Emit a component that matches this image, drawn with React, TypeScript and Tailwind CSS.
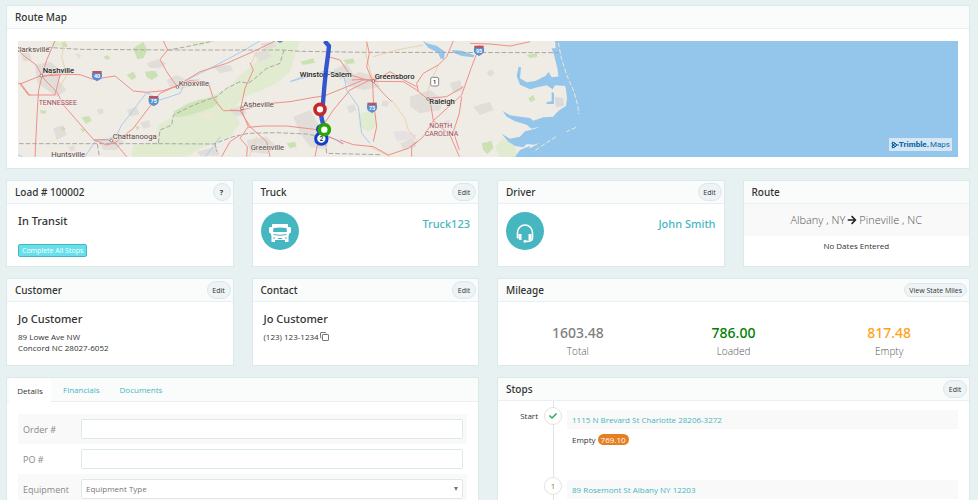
import type { ReactNode } from 'react'
import { FaArrowRight, FaCheck } from 'react-icons/fa'

interface CardProps {
  title: string
  action?: string
  className?: string
  children: ReactNode
}

function PillButton({ label }: { label: string }) {
  const shape =
    label === '?'
      ? 'h-[18px] w-[18px] font-bold'
      : label === 'Edit'
        ? 'h-[18px] w-6'
        : 'h-[14px] px-1'
  return (
    <button
      type="button"
      className={`${shape} flex shrink-0 items-center justify-center whitespace-nowrap rounded-full border border-[#dbe7ea] bg-[#eef3f5] text-[7px] leading-none text-[#333]`}
    >
      {label}
    </button>
  )
}

function Card({ title, action, className = '', children }: CardProps) {
  return (
    <section className={`border border-[#dce9ea] bg-white ${className}`}>
      <header className="flex h-[23px] items-center justify-between border-b border-[#e8f1f1] bg-[#f9fcfb] pl-2 pr-0.5">
        <h2 className="font-['Noto_Sans',sans-serif] text-[10px] font-medium leading-none">{title}</h2>
        {action && <PillButton label={action} />}
      </header>
      {children}
    </section>
  )
}

const URBAN = [
  '105,195 150,185 190,215 175,240 200,270 170,290 130,262 112,250',
  '440,190 470,178 500,190 480,205 450,204',
  '500,240 530,225 560,240 600,235 590,255 540,268 510,262',
  '640,200 690,195 700,212 660,220',
  '300,430 340,410 372,425 350,450 310,450',
  '740,420 800,410 830,440 800,462 750,455',
  '690,330 725,315 740,340 710,350',
  '880,350 930,330 960,380 990,400 980,450 930,440 900,400',
  '1030,240 1080,215 1125,230 1140,260 1090,270 1050,260',
  '1230,290 1290,270 1330,300 1320,330 1260,340 1230,320',
  '1000,210 1040,190 1062,225 1020,240',
  '1350,250 1380,240 1390,270 1360,280',
  '760,160 800,150 815,170 780,185',
  '780,130 820,125 830,140 795,150',
  '62,160 90,158 95,180 70,184',
  '160,385 190,375 200,405 170,420',
  '380,330 410,322 420,342 390,350',
  '590,455 650,440 660,466 600,468',
  '1420,320 1470,305 1480,330 1440,345',
  '1200,430 1240,415 1250,440 1210,450',
  '420,368 448,360 452,380 430,386',
  '225,160 245,166 238,176',
  '290,330 306,324 312,338 298,344',
  '205,440 222,436 226,450 210,454',
  '1150,300 1170,306 1160,322 1144,316',
  '1330,365 1346,360 1352,376 1338,382',
  '1460,215 1476,208 1484,222 1468,230',
  '1040,320 1062,312 1070,330 1050,340',
]

const WOODS = [
  '310,170 322,166 332,174 320,180',
  '380,225 400,215 410,232 395,240',
  '435,215 465,212 475,228 455,240 440,232',
  '400,145 430,125 442,150 430,175 412,178',
  '185,125 200,130 202,142 188,140',
  '245,352 268,348 275,362 258,372',
  '120,330 140,332 136,342 122,340',
  '180,380 198,385 190,396',
  '240,385 256,388 250,398',
  '210,205 222,212 216,220',
  '405,375 420,382 412,392',
  '900,185 940,175 945,188 910,195',
  '1030,180 1060,175 1064,190 1040,192',
  '1580,165 1610,158 1612,170 1590,175',
  '1585,295 1600,285 1606,300 1592,306',
  '1445,430 1475,422 1480,445 1462,462 1450,450',
  '860,430 885,425 890,440 870,445',
]

const ROADS = [
  'M54,150 L75,170 110,196 126,228 135,240 172,278 190,315 225,355 280,418 320,435 345,428 380,470',
  'M165,123 L140,180 126,226 60,252 85,285 165,285 180,225 126,228',
  'M126,228 L116,270 112,330 105,470',
  'M54,250 L62,250 90,287',
  'M126,230 L160,222 240,224 280,238 345,228 400,273 440,277 490,272 530,258 570,242 625,248 640,295 670,332 720,332',
  'M490,123 L503,150 480,178 500,215 530,258 480,280 430,345 400,385 345,428 320,418 280,420',
  'M530,258 L600,215 680,190 770,150 825,123',
  'M750,188 L760,210 735,265 722,325 745,380 720,415 742,440 740,470',
  'M720,332 L790,312 870,305 925,295 975,287 1090,240 1130,238',
  'M720,332 L752,382 800,425 810,470',
  'M745,382 L790,378 860,378 960,390 1000,330 1050,270 1110,240',
  'M690,330 L720,332',
  'M985,170 L1020,180 1050,225 1120,245 1170,215 1215,242 1250,260',
  'M1100,125 L1108,160 1100,200 1118,245 1120,300 1130,380 1120,425',
  'M1055,240 L1090,238 1120,244 1210,245 1250,270 1280,295 1340,290 1390,260',
  'M1360,123 L1340,170 1315,195 1270,220 1250,250 1255,275',
  'M1440,135 L1415,200 1385,285 1300,362 1270,410 1235,440 1235,470',
  'M1290,300 L1300,362 1350,405 1378,470',
  'M1385,290 L1378,340 1360,395 1378,450',
  'M1120,246 L1150,280 1175,305',
  'M1020,420 L1060,434 1120,440 1165,465 1225,445 1250,425',
  'M960,395 L945,470',
  'M1410,130 L1470,132 1530,138 1590,125',
  'M720,405 L690,425 665,470',
]

const MINOR_ROADS = [
  'M195,123 L185,170 200,225 175,270',
  'M770,155 L755,190',
  'M770,410 L748,470',
  'M1100,125 L1098,165 1118,240',
  'M1175,300 L1215,355 1225,390 1250,420',
  'M1315,195 L1290,250 1280,290',
  'M1120,170 L1190,150 1270,135',
  'M1110,440 L1170,470',
]

const RIVERS = [
  'M780,123 L725,155 640,200 560,240 540,280 480,300 440,278 415,310 385,350 365,375 350,405 320,420 285,425 255,470',
  'M925,230 L870,245 895,235 970,215 1030,218 1040,270 1075,320 1085,400 1110,430',
  'M660,410 L640,440 615,470',
  'M54,464 L68,471',
]

interface Label {
  text: string
  x: number
  y: number
  kind: 'city' | 'town' | 'state'
}

const LABELS: Label[] = [
  { text: 'Clarksville', x: 44, y: 155, kind: 'town' },
  { text: 'Nashville', x: 128, y: 219, kind: 'city' },
  { text: 'TENNESSEE', x: 116, y: 315, kind: 'state' },
  { text: 'Knoxville', x: 536, y: 257, kind: 'town' },
  { text: 'Asheville', x: 730, y: 320, kind: 'town' },
  { text: 'Chattanooga', x: 338, y: 417, kind: 'town' },
  { text: 'Huntsville', x: 154, y: 471, kind: 'town' },
  { text: 'Greenville', x: 752, y: 450, kind: 'town' },
  { text: 'Winston-Salem', x: 899, y: 231, kind: 'city' },
  { text: 'Greensboro', x: 1124, y: 237, kind: 'city' },
  { text: 'Raleigh', x: 1288, y: 311, kind: 'city' },
  { text: 'NORTH', x: 1288, y: 383, kind: 'state' },
  { text: 'CAROLINA', x: 1274, y: 409, kind: 'state' },
]

const LABEL_STYLES = {
  city: 'fill-[#1f1f1f] text-[23px] font-medium',
  town: 'fill-[#5a4545] text-[23px] font-normal',
  state: 'fill-[#a14a5c] text-[21px] font-normal',
}

function Shield({ x, y, text }: { x: number; y: number; text?: string }) {
  return (
    <g transform={`translate(${x} ${y})`}>
      <path d="M-15,-8 Q-17,6 -10,11 L0,17 L10,11 Q17,6 15,-8Z" fill="#5b8fd0" />
      <path d="M-14,-14 H14 V-7 H-14Z" fill="#b9555f" />
      {text && (
        <text y="8" textAnchor="middle" className="fill-white text-[16px] font-bold">
          {text}
        </text>
      )}
    </g>
  )
}

// Drawn on a grid of three units to the pixel
function RouteMap() {
  return (
    <svg
      viewBox="54 123 2820 348"
      preserveAspectRatio="xMinYMin slice"
      className="block h-[116px] w-full bg-[#94c5ea] font-[Roboto,sans-serif]"
      role="img"
      aria-label="Route map"
    >
      <path
        d="M54,123 H1665 L1668,150 1674,170 1682,200 1686,232 1694,246 1698,270 1701,295 1698,318 1682,328 1668,340 1655,356 1632,362 1640,385 1612,420 1618,430 1590,445 1575,455 1560,471 H54Z"
        fill="#efece6"
      />
      <g fill="#e1ebd0">
        <path d="M475,375 L520,350 580,315 640,285 690,260 720,225 765,190 800,130 825,123 900,123 885,165 870,215 830,250 775,275 730,290 700,330 720,370 690,410 640,430 600,445 560,470 395,470 400,435 470,425Z" />
        <path d="M1075,345 L1110,330 1130,345 1128,380 1105,395 1078,380Z" />
        <path d="M1485,440 L1510,415 1545,440 1555,471 1500,471Z" />
        <path d="M150,123 L200,128 190,138 155,140Z" />
        <path d="M560,123 L640,123 600,140Z" />
      </g>
      <path
        d="M520,335 L560,312 600,298 650,290 655,308 640,322 600,335 560,348 525,352Z"
        fill="#cfe4b8"
      />
      <path d="M600,345 L622,338 640,348 625,358Z" fill="#f2e6cf" />
      <path d="M1180,395 L1210,392 1250,405 1240,420 1190,422Z" fill="#e6dfe3" />
      <g fill="#e1ded9">
        {URBAN.map((points) => (
          <polygon key={points} points={points} />
        ))}
      </g>
      <g fill="#cbe0b3">
        {WOODS.map((points) => (
          <polygon key={points} points={points} />
        ))}
      </g>

      {/* Lakes and sounds */}
      <g fill="#94c5ea">
        <path d="M1268,123 L1285,131 1310,137 1335,155 1332,176 1322,176 1314,158 1285,143Z" />
        <path d="M1355,150 L1385,152 1424,166 1420,172 1385,168 1360,158Z" />
        <path d="M1556,200 L1563,202 1560,235 1580,247 1606,243 1636,228 1646,216 1655,232 1690,228 1698,258 1665,256 1658,268 1640,256 1612,262 1590,268 1560,254 1550,228Z" />
        <path d="M1655,145 L1662,165 1672,205 1676,232 1690,236 1686,190 1674,145Z" />
        <path d="M1655,275 L1662,280 1662,312 1640,312 1640,306 1655,304Z" />
        <path d="M1508,333 L1530,346 1560,350 1590,354 1600,362 1630,352 1660,350 1645,392 1612,382 1594,386 1580,374 1545,364 1520,350Z" />
        <path d="M1505,401 L1530,416 1560,410 1575,394 1600,388 1648,372 1630,427 1600,434 1580,432 1570,442 1545,438 1525,425Z" />
        <path d="M1545,471 L1560,450 1590,438 1584,471Z" />
      </g>
      <path d="M1664,290 L1690,295 1692,318 1668,322Z" fill="#ded9d9" />
      <path
        d="M1675,128 L1684,175 1700,225 1722,275 1734,320 1736,342 M1728,382 L1700,395 M1668,410 L1640,428 1600,455"
        fill="none"
        stroke="#e8ead9"
        strokeWidth="3"
        strokeDasharray="14 6"
      />

      <g fill="none" stroke="#a9cdec" strokeWidth="3">
        {RIVERS.map((d) => (
          <path key={d} d={d} />
        ))}
      </g>
      <g fill="none" stroke="#aaa7a3" strokeWidth="3" strokeDasharray="14 6">
        <path d="M140,142 L240,148 380,149 505,150 560,140 640,123" />
        <path d="M505,150 H850 L900,154 1100,157 1676,158" />
        <path d="M57,431 H475 L480,390 515,375 520,345 570,320 620,300 650,290 680,265 720,245 745,250 765,235 800,205 840,190 852,150" />
        <path d="M475,431 L640,432 700,410 745,400 830,398 920,402 975,412 980,460 1140,464" />
        <path d="M292,432 L298,470 M645,430 L650,455" />
      </g>
      <g fill="none" stroke="#ead3ae" strokeWidth="3">
        {MINOR_ROADS.map((d) => (
          <path key={d} d={d} />
        ))}
      </g>
      <g fill="none" stroke="#f08f89" strokeWidth="3" strokeLinejoin="round">
        {ROADS.map((d) => (
          <path key={d} d={d} />
        ))}
      </g>
      <path d="M985,410 L1010,420 1030,432" fill="none" stroke="#c893b8" strokeWidth="4" />

      {LABELS.map(({ text, x, y, kind }) => (
        <text
          key={text}
          x={x}
          y={y}
          className={`${LABEL_STYLES[kind]} stroke-[#f2efe9] stroke-[3px] [paint-order:stroke]`}
        >
          {text}
        </text>
      ))}
      <g fill="#fff" stroke="#555" strokeWidth="2">
        <circle cx="124" cy="227" r="4" />
        <circle cx="532" cy="261" r="4" />
        <circle cx="726" cy="325" r="4" />
        <circle cx="334" cy="422" r="4" />
        <circle cx="1120" cy="243" r="4" />
        <circle cx="1284" cy="297" r="4" />
      </g>

      <Shield x={291} y={227} text="40" />
      <Shield x={461} y={302} text="75" />
      <Shield x={840} y={112} />
      <Shield x={1116} y={322} text="73" />
      <Shield x={1437} y={151} text="95" />
      <rect x="1292" y="232" width="24" height="26" rx="5" fill="#fff" stroke="#888" strokeWidth="3" />
      <text x="1304" y="252" textAnchor="middle" className="fill-[#444] text-[17px] font-bold">
        1
      </text>

      <path
        d="M974,123 L987,138 984,165 978,210 973,260 968,320 964,350 971,380 964,415"
        fill="none"
        stroke="#1f45c8"
        strokeOpacity="0.9"
        strokeWidth="13"
        strokeLinejoin="round"
      />
      <circle cx="964" cy="388" r="16" fill="#1f45c8" />
      <circle cx="964" cy="416" r="17" fill="#fff" stroke="#1140c9" strokeWidth="9" />
      <text x="964" y="424" textAnchor="middle" className="fill-[#222] text-[20px] font-medium">
        2
      </text>
      <circle cx="960" cy="328" r="15" fill="#fff" stroke="#c4282b" strokeWidth="11" />
      <circle cx="973" cy="389" r="15" fill="#fff" stroke="#2ca407" strokeWidth="11" />
    </svg>
  )
}

function MapCredit() {
  return (
    <div className="absolute bottom-[6px] right-[6px] flex h-[13px] items-center bg-[#d5e7f6] px-0.5 font-[Roboto,sans-serif] text-[8px] leading-none text-[#0f67a5]">
      <svg viewBox="0 0 8 8" className="h-2 w-2" fill="none" stroke="currentColor" aria-hidden="true">
        <path d="M1.5 1 L4 2 L6 4 L4 6 L1.5 7 Z M1.5 4 H8 M0.5 2.5 L4 6 M0.5 5.5 L4 2" />
      </svg>
      <span className="font-extrabold">Trimble.</span>
      <span className="pl-px">Maps</span>
    </div>
  )
}

function TruckIcon() {
  return (
    <svg viewBox="0 0 24 20" className="mt-[3px] h-5 w-6" fill="#fff" aria-hidden="true">
      <path
        fillRule="evenodd"
        d="M4 1 H20 V4 H22 L23 5 V9 L22 10.500 H21 V12 L20.500 13 V19 H17 V17 H7 V19 H3.500 V13 L3 12 V10.500 H2 L1 9 V5 L2 4 H4Z M5.500 5 Q12 4 18.500 5 L19 9 H5Z M5.500 11 Q12 12.500 18.500 11 V12 Q12 13.500 5.500 12Z M5 14.500 H7 V15.500 H5Z M17 14.500 H19 V15.500 H17Z M10 15 H14 V16 H10Z"
      />
    </svg>
  )
}

function HeadsetIcon() {
  return (
    <svg viewBox="0 0 18 20" className="mt-[3px] h-5 w-[18px]" fill="none" stroke="#fff" aria-hidden="true">
      <path strokeWidth="1.600" d="M1.500 15.500 V9.500 A7.500 7.500 0 0 1 16.500 9.500 V15 Q16.500 18.500 10 18.500" />
      <path fill="#fff" stroke="none" d="M2.500 11 H5.500 V17 H4 Q2.500 17 2.500 15Z M12.500 11 H15.500 V15 Q15.500 17 14 17 H12.500Z" />
      <circle cx="9" cy="18.300" r="1.500" fill="#fff" stroke="none" />
    </svg>
  )
}

function CopyIcon() {
  return (
    <svg viewBox="0 0 9 9" className="block h-[9px] w-[9px]" fill="none" stroke="#777" aria-hidden="true">
      <path d="M1.500 6 H1 Q0.500 6 0.500 5.500 V1 Q0.500 0.500 1 0.500 H5.500 Q6 0.500 6 1 V1.500" />
      <rect x="2.500" y="2.500" width="6" height="6" rx="0.500" />
    </svg>
  )
}

interface AssignmentProps {
  title: string
  name: string
  icon: ReactNode
}

function AssignmentCard({ title, name, icon }: AssignmentProps) {
  return (
    <Card title={title} action="Edit">
      <div className="flex justify-between pl-2 pr-2 pt-2">
        <span className="flex h-[38px] w-[38px] items-center justify-center rounded-full bg-[#46b6c0]">
          {icon}
        </span>
        <a href="#" className="pt-1 font-['Noto_Sans',sans-serif] text-[11px] font-medium leading-4 text-[#46b6c0]">
          {name}
        </a>
      </div>
    </Card>
  )
}

const MILEAGE = [
  { value: '1603.48', label: 'Total', color: 'text-[#808080]' },
  { value: '786.00', label: 'Loaded', color: 'text-[#008000]' },
  { value: '817.48', label: 'Empty', color: 'text-[#ffa21a]' },
]

interface FormRowProps {
  label: string
  id: string
  shaded?: boolean
  children: ReactNode
}

function FormRow({ label, id, shaded, children }: FormRowProps) {
  return (
    <div className={`flex items-center py-[5px] pl-[5px] pr-1 ${shaded ? 'bg-[#f9f9f9]' : ''}`}>
      <label htmlFor={id} className="w-[58px] shrink-0 text-[9px] leading-none text-[#888]">
        {label}
      </label>
      {children}
    </div>
  )
}

const FIELD = 'h-5 w-full min-w-0 rounded-xs border border-[#dce9ea] bg-white text-[8px]'

function DetailsCard() {
  return (
    <section className="col-span-2 border border-[#dce9ea] bg-white">
      <div role="tablist" className="flex h-6 items-end border-b border-[#e8f1f1] bg-[#f9fcfb] pl-0.5 text-[8px]">
        <button type="button" role="tab" aria-selected="true" className="-mb-px h-[23px] w-[42px] rounded-t-xs bg-white text-[#333]">
          Details
        </button>
        <button type="button" role="tab" aria-selected="false" className="h-[22px] px-3 text-[#46b6c0]">
          Financials
        </button>
        <button type="button" role="tab" aria-selected="false" className="h-[22px] px-2 text-[#46b6c0]">
          Documents
        </button>
      </div>
      <form className="px-[11px] pt-3">
        <FormRow label="Order #" id="order" shaded>
          <input id="order" type="text" className={FIELD} />
        </FormRow>
        <FormRow label="PO #" id="po">
          <input id="po" type="text" className={FIELD} />
        </FormRow>
        <FormRow label="Equipment" id="equipment" shaded>
          <div className="relative w-full">
            <select id="equipment" className={`${FIELD} block appearance-none pl-1 text-[#777]`}>
              <option>Equipment Type</option>
            </select>
            <span className="pointer-events-none absolute right-[5px] top-2 border-x-[2px] border-t-[4px] border-x-transparent border-t-[#777]" />
          </div>
        </FormRow>
      </form>
    </section>
  )
}

interface StopProps {
  marker: ReactNode
  label?: string
  address: string
  children?: ReactNode
}

function Stop({ marker, label, address, children }: StopProps) {
  return (
    <li className="flex h-[70px]">
      <span className="w-10 shrink-0 pt-[11px] text-right text-[8px] leading-none">{label}</span>
      <div className="relative ml-[6px] flex w-[18px] shrink-0 justify-center">
        <span className="w-px bg-[#e3e3e3]" />
        <span className="absolute left-0 top-[6px] flex h-[18px] w-[18px] items-center justify-center rounded-full border border-[#e3e3e3] bg-white text-[8px] text-[#a8742c]">
          {marker}
        </span>
      </div>
      <div className="ml-[5px] mr-[11px] grow pt-[9px]">
        <div className="bg-[#f9f9f9] px-[5px] py-1 text-[8px] leading-[11px]">
          <a href="#" className="text-[#46b6c0]">
            {address}
          </a>
        </div>
        {children}
      </div>
    </li>
  )
}

export default function App() {
  return (
    <main className="h-screen overflow-hidden bg-[#e8f1f1] pb-3 pl-[6px] pr-2 pt-[5px] font-['Open_Sans','Noto_Sans',sans-serif] text-[#333]">
      <div className="grid grid-cols-4 gap-x-[18px] gap-y-[11px]">
        <Card title="Route Map" className="col-span-4">
          <div className="relative mx-[11px] mb-[11px] mt-3">
            <RouteMap />
            <MapCredit />
          </div>
        </Card>

        <Card title="Load # 100002" action="?" className="min-h-[87px]">
          <div className="px-[11px] pt-[9px]">
            <p className="font-['Noto_Sans',sans-serif] text-[11px] font-medium leading-4">In Transit</p>
            <button
              type="button"
              className="mt-[15px] flex h-[13px] items-center whitespace-nowrap rounded-xs border border-[#46b6c0] bg-[#66e0ea] px-[3px] text-[7px] leading-none text-white"
            >
              Complete All Stops
            </button>
          </div>
        </Card>
        <AssignmentCard title="Truck" name="Truck123" icon={<TruckIcon />} />
        <AssignmentCard title="Driver" name="John Smith" icon={<HeadsetIcon />} />
        <Card title="Route">
          <p className="flex h-8 items-center justify-center gap-0.5 whitespace-nowrap bg-[#f9f9f9] text-[11px] font-light text-[#555]">
            Albany , NY
            <FaArrowRight className="h-[10px] w-[10px] text-[#222]" />
            Pineville , NC
          </p>
          <p className="pt-1 text-center text-[8px] leading-3">No Dates Entered</p>
        </Card>

        <Card title="Customer" action="Edit" className="min-h-[88px]">
          <div className="px-[11px] pt-[9px]">
            <p className="font-['Noto_Sans',sans-serif] text-[11px] font-medium leading-4">Jo Customer</p>
            <address className="pt-1 text-[8px] not-italic leading-[11px]">
              89 Lowe Ave NW
              <br />
              Concord NC 28027-6052
            </address>
          </div>
        </Card>
        <Card title="Contact" action="Edit">
          <div className="px-[11px] pt-[9px]">
            <p className="font-['Noto_Sans',sans-serif] text-[11px] font-medium leading-4">Jo Customer</p>
            <p className="flex items-center gap-px pt-1 text-[8px] leading-[11px]">
              (123) 123-1234
              <button type="button" aria-label="Copy phone number">
                <CopyIcon />
              </button>
            </p>
          </div>
        </Card>
        <Card title="Mileage" action="View State Miles" className="col-span-2">
          <dl className="grid grid-cols-3 px-[2px] pt-[21px] text-center">
            {MILEAGE.map(({ value, label, color }) => (
              <div key={label} className="flex flex-col-reverse">
                <dt className="text-[10px] font-light leading-4 text-[#555]">{label}</dt>
                <dd className={`font-['Noto_Sans',sans-serif] text-[14px] font-medium leading-5 ${color}`}>{value}</dd>
              </div>
            ))}
          </dl>
        </Card>

        <DetailsCard />
        <Card title="Stops" action="Edit" className="col-span-2">
          <ol>
            <Stop marker={<FaCheck className="h-2 w-2 text-[#27ae60]" />} label="Start" address="1115 N Brevard St Charlotte 28206-3272">
              <p className="flex items-center gap-0.5 px-[5px] pt-[5px] text-[8px] leading-[11px]">
                Empty
                <span className="rounded-full bg-[#e67e22] px-[3px] text-[8px] text-white">769.10</span>
              </p>
            </Stop>
            <Stop marker="1" address="89 Rosemont St Albany NY 12203" />
          </ol>
        </Card>
      </div>
    </main>
  )
}
